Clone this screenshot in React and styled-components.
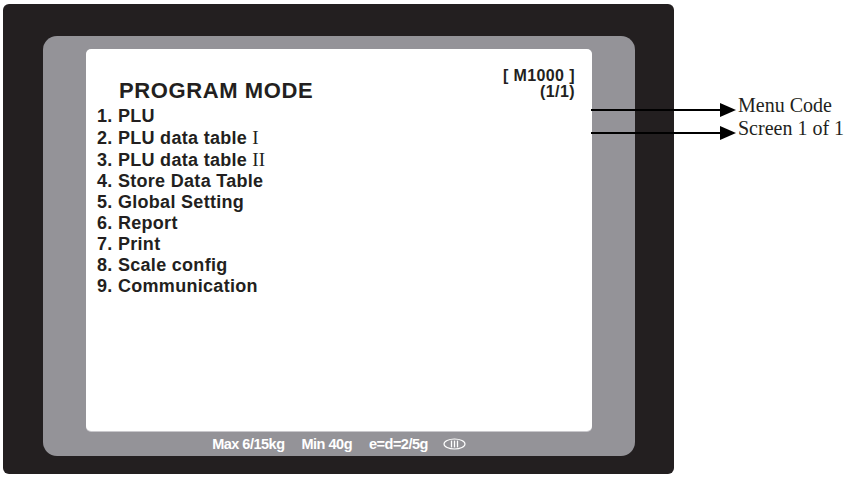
import React from "react";
import styled, { createGlobalStyle } from "styled-components";

const ink = "#231f20";
const frameGray = "#949398";

const GlobalStyle = createGlobalStyle`
    html, body {
        margin: 0;
        padding: 0;
        background: #fff;
    }
    body {
        font-family: "Liberation Sans", Arial, sans-serif;
    }
`;

const menu = [
    { n: 1, label: "PLU" },
    { n: 2, label: "PLU data table", roman: "I" },
    { n: 3, label: "PLU data table", roman: "II" },
    { n: 4, label: "Store Data Table" },
    { n: 5, label: "Global Setting" },
    { n: 6, label: "Report" },
    { n: 7, label: "Print" },
    { n: 8, label: "Scale config" },
    { n: 9, label: "Communication" },
];

const notes = [
    { top: 100, label: "Menu Code" },
    { top: 123, label: "Screen 1 of 1" },
];

function ClassMark() {
    return (
        <svg width="23" height="12" viewBox="0 0 23 12">
            <ellipse cx="11.5" cy="6" rx="10.5" ry="5" fill="none" stroke="#fff" strokeWidth="1.1" />
            <line x1="8.5" y1="2.6" x2="8.5" y2="9.4" stroke="#fff" strokeWidth="1.3" />
            <line x1="11.5" y1="2.6" x2="11.5" y2="9.4" stroke="#fff" strokeWidth="1.3" />
            <line x1="14.5" y1="2.6" x2="14.5" y2="9.4" stroke="#fff" strokeWidth="1.3" />
        </svg>
    );
}

export default function App() {
    return (
        <>
            <GlobalStyle />
            <Page>
                <Bezel>
                    <Frame>
                        <Screen>
                            <TopRow>
                                <Heading>PROGRAM MODE</Heading>
                                <CodeBlock>
                                    <div>[ M1000 ]</div>
                                    <div>(1/1)</div>
                                </CodeBlock>
                            </TopRow>
                            <MenuList>
                                {menu.map((item) => (
                                    <MenuItem key={item.n}>
                                        {item.n}. {item.label}
                                        {item.roman && <Roman> {item.roman}</Roman>}
                                    </MenuItem>
                                ))}
                            </MenuList>
                        </Screen>
                        <Footer>
                            <span>Max 6/15kg</span>
                            <span>Min 40g</span>
                            <span>e=d=2/5g</span>
                            <ClassMark />
                        </Footer>
                    </Frame>
                </Bezel>

                {notes.map((note) => (
                    <Callout key={note.label} $top={note.top}>
                        <Leader />
                        <Head />
                        <CalloutLabel>{note.label}</CalloutLabel>
                    </Callout>
                ))}
            </Page>
        </>
    );
}

const Page = styled.div`
    position: relative;
    width: 851px;
    height: 477px;
    overflow: hidden;
    background: #fff;
`;

const Bezel = styled.div`
    box-sizing: border-box;
    width: 671px;
    height: 470px;
    margin: 4px 0 0 3px;
    padding: 32px 39px 18px 40px;
    background: ${ink};
    border-radius: 6px;
`;

const Frame = styled.div`
    box-sizing: border-box;
    height: 420px;
    padding: 13px 43px 0 43px;
    background: ${frameGray};
    border-radius: 14px;
    display: flex;
    flex-direction: column;
`;

const Screen = styled.div`
    box-sizing: border-box;
    height: 382px;
    padding: 19px 17px 0 11px;
    background: #fff;
    border-radius: 5px;
    box-shadow: 0 1px 0 #c9c8cc;
    color: ${ink};
`;

const TopRow = styled.div`
    display: flex;
    justify-content: space-between;
    align-items: flex-start;
`;

const Heading = styled.h1`
    margin: 11px 0 0 22px;
    font-size: 22px;
    line-height: 24px;
    font-weight: bold;
    letter-spacing: 0.6px;
`;

const CodeBlock = styled.div`
    text-align: right;
    font-size: 16px;
    line-height: 16px;
    font-weight: bold;
    letter-spacing: 0.4px;
`;

const MenuList = styled.ol`
    list-style: none;
    margin: 3px 0 0;
    padding: 0;
`;

const MenuItem = styled.li`
    font-size: 18px;
    line-height: 21px;
    font-weight: bold;
    letter-spacing: 0.3px;
    white-space: pre;
`;

const Roman = styled.span`
    font-family: "Liberation Serif", "Times New Roman", serif;
    font-weight: normal;
    font-size: 19px;
`;

const Footer = styled.div`
    flex: 1;
    display: flex;
    align-items: center;
    justify-content: center;
    gap: 17px;
    color: #fff;
    font-size: 14.5px;
    font-weight: bold;
    letter-spacing: -0.5px;

    svg {
        margin-left: -2px;
    }
`;

const Callout = styled.div`
    position: absolute;
    left: 591px;
    top: ${(p) => p.$top}px;
    height: 20px;
    display: flex;
    align-items: center;
`;

const Leader = styled.div`
    width: 129px;
    height: 2px;
    background: #000;
`;

const Head = styled.div`
    width: 0;
    height: 0;
    border-top: 7px solid transparent;
    border-bottom: 7px solid transparent;
    border-left: 16px solid #000;
`;

const CalloutLabel = styled.span`
    margin: -10px 0 0 2px;
    font-family: "Liberation Serif", "Times New Roman", serif;
    font-size: 20px;
    line-height: 20px;
    color: ${ink};
    white-space: nowrap;
`;
